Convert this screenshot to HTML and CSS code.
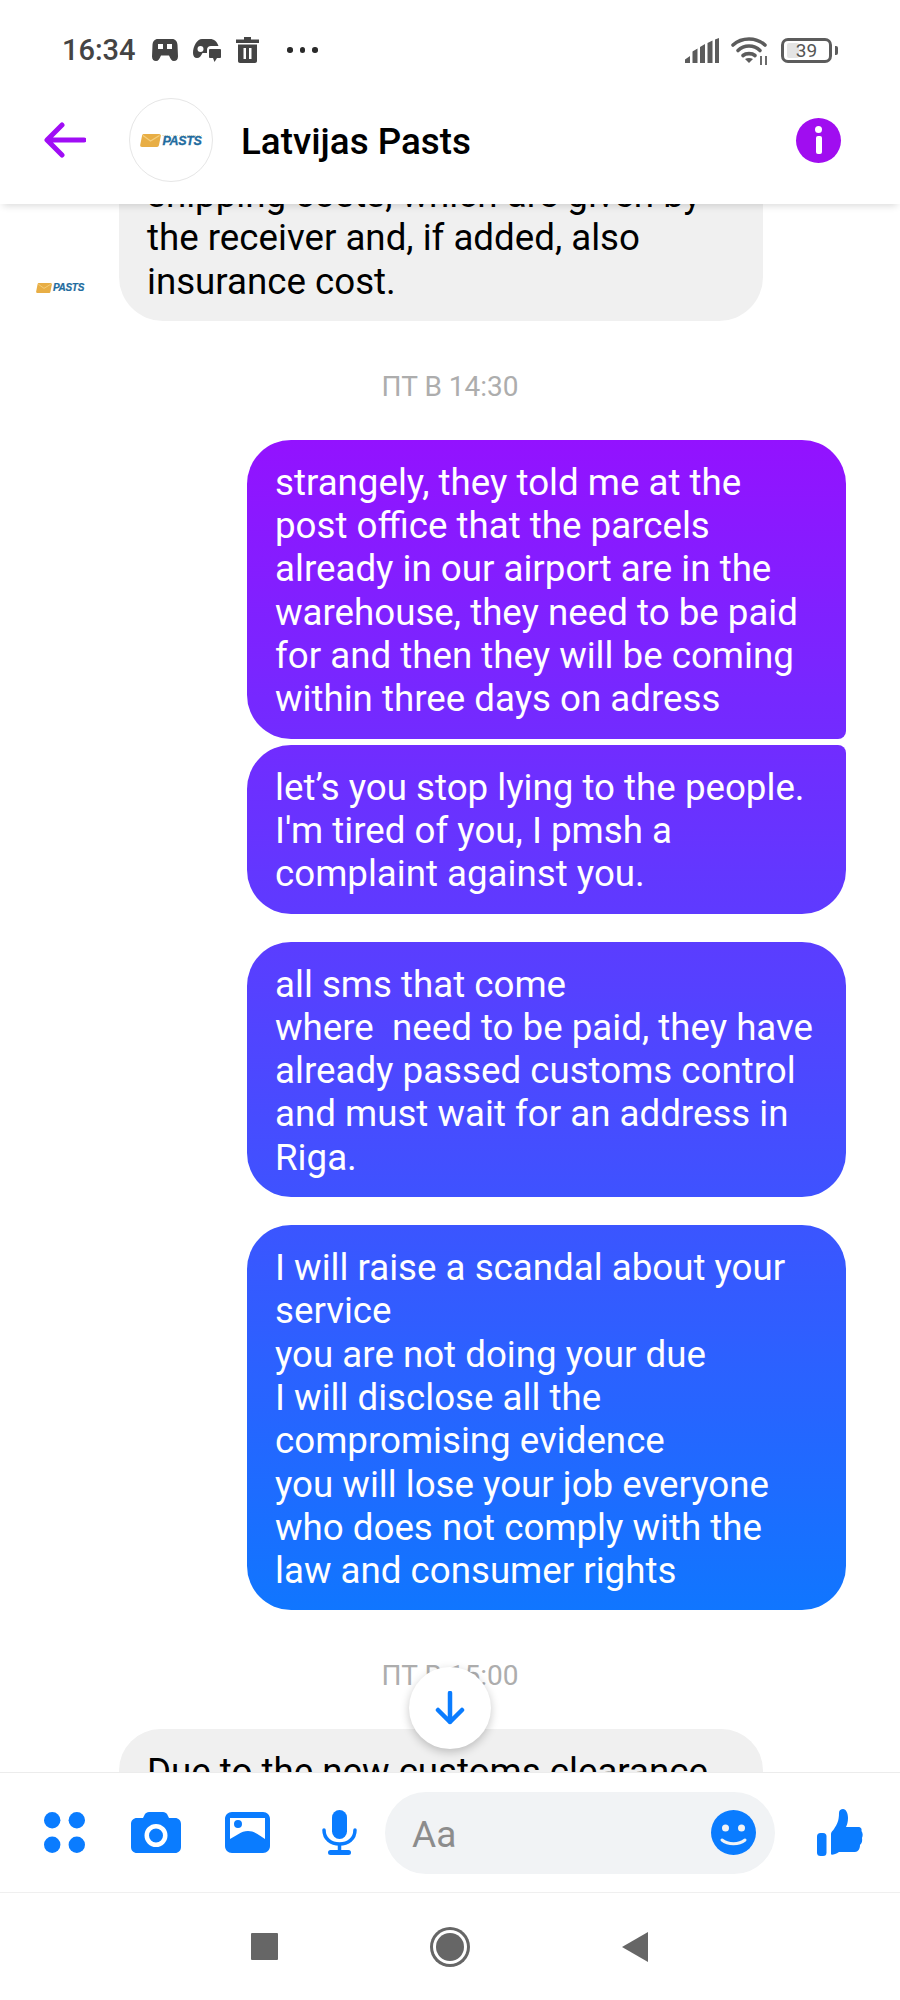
FILE: index.html
```html
<!DOCTYPE html>
<html lang="en">
<head>
<meta charset="utf-8">
<title>Latvijas Pasts</title>
<link rel="stylesheet" href="styles.css">
</head>
<body>
<div class="phone">
  <div class="status">
    <span class="clock">16:34</span>
    <svg class="st-game" viewBox="0 0 26 22"><path fill-rule="evenodd" d="M6 0H20C23.500 0 25.300 2.500 25.500 6L26 17.500C26 20.500 24.200 22 22 22C19.500 22 18.500 20 17 16.500H9C7.500 20 6.500 22 4 22C1.800 22 0 20.500 0 17.500L.5 6C.7 2.500 2.500 0 6 0ZM6 5V10H11V5ZM15 5V10H20V5Z"/></svg>
    <svg class="st-game2" viewBox="0 0 28 24"><path fill-rule="evenodd" d="M9 1H17C21 1 24 3.500 25.500 8H18C15.500 8 14 9.500 14 12V15H9.500C8 18 6.500 20 4 20C1.500 20 0 18 0 15C0 8.500 4 1 9 1ZM7.500 8A3 3 0 1 0 7.500 14 3 3 0 0 0 7.500 8Z"/><path d="M17 11H27C27.500 11 28 11.500 28 12V19C28 19.500 27.500 20 27 20H24L21.500 24L20 20H17C16.500 20 16 19.500 16 19V12C16 11.500 16.500 11 17 11Z"/></svg>
    <svg class="st-trash" viewBox="0 0 23 26"><path fill-rule="evenodd" d="M8 0H15V2.500H23V6H0V2.500H8ZM2 7.500H21V24C21 25.200 20.200 26 19 26H4C2.800 26 2 25.200 2 24ZM7.500 11V22H10V11ZM13 11V22H15.500V11Z"/></svg>
    <span class="st-dots"><i></i><i></i><i></i></span>
    <span class="st-right">
      <svg class="st-signal" viewBox="0 0 34 25"><path d="M0 25V21.500L5 18V25ZM7.500 25V13.500L12.500 10.500V25ZM15 25V9L20 6V25ZM22.500 25V5L27.500 2.500V25ZM30 25V1.500L34 0V25Z"/></svg>
      <svg class="st-wifi" viewBox="0 0 38 29"><g fill="none" stroke="#5c5c5c" stroke-width="3.600" stroke-linecap="round"><path d="M2 9C11 1 25 1 34 9"/><path d="M7 14.500C13 8.500 23 8.500 29 14.500"/><path d="M12 19.500C15 17 21 17 24 19.500"/></g><path d="M14 23L18 27L22 23C19.500 21.500 16.500 21.500 14 23Z"/><path d="M30 20V29M35 20V29" stroke="#5c5c5c" stroke-width="1.800"/></svg>
      <span class="battery"><span class="battery-fill"></span><span class="battery-num">39</span></span>
      <span class="battery-nub"></span>
    </span>
  </div>

  <header class="topbar">
    <svg class="back" viewBox="0 0 42 36"><path d="M40 18H4M18 3L3 18L18 33" fill="none" stroke="#a00df5" stroke-width="5" stroke-linecap="round" stroke-linejoin="round"/></svg>
    <div class="avatar">
      <span class="logo"><svg class="env" viewBox="0 0 21 13"><path d="M3.500 0H19C20.500 0 21 1 20.800 2L19 11C18.800 12.300 18 13 17 13H2C.7 13 0 12 .2 11L2 2C2.200 .7 2.800 0 3.500 0Z" fill="#e8ae45"/><path d="M3 1.500L10.500 7L19.500 1.500" fill="none" stroke="#f5cf7e" stroke-width="1.200"/></svg><span class="logo-word">PASTS</span></span>
    </div>
    <h1 class="title">Latvijas Pasts</h1>
    <span class="info"><span class="info-dot"></span><span class="info-bar"></span></span>
  </header>

  <main class="thread">
    <div class="in-row in-first">
      <div class="avatar-sm">
        <span class="logo"><svg class="env-sm" viewBox="0 0 21 13"><path d="M3.500 0H19C20.500 0 21 1 20.800 2L19 11C18.800 12.300 18 13 17 13H2C.7 13 0 12 .2 11L2 2C2.200 .7 2.800 0 3.500 0Z" fill="#e8ae45"/><path d="M3 1.500L10.500 7L19.500 1.500" fill="none" stroke="#f5cf7e" stroke-width="1.200"/></svg><span class="logo-word-sm">PASTS</span></span>
      </div>
      <div class="bubble-in">shipping costs, which are given by<br>the receiver and, if added, also<br>insurance cost.</div>
    </div>

    <div class="stamp stamp-one">ПТ В 14:30</div>

    <div class="bubble-out tail-bottom">strangely, they told me at the<br>post office that the parcels<br>already in our airport are in the<br>warehouse, they need to be paid<br>for and then they will be coming<br>within three days on adress</div>
    <div class="bubble-out tail-top close">let’s you stop lying to the people.<br>I'm tired of you, I pmsh a<br>complaint against you.</div>
    <div class="bubble-out">all sms that come<br>where &nbsp;need to be paid, they have<br>already passed customs control<br>and must wait for an address in<br>Riga.</div>
    <div class="bubble-out">I will raise a scandal about your<br>service<br>you are not doing your due<br>I will disclose all the<br>compromising evidence<br>you will lose your job everyone<br>who does not comply with the<br>law and consumer rights</div>

    <div class="stamp stamp-two">ПТ В 15:00</div>

    <div class="in-row">
      <div class="avatar-gap"></div>
      <div class="bubble-in">Due to the new customs clearance</div>
    </div>

    <button class="scroll-down" aria-label="Scroll down"><svg viewBox="0 0 30 34"><path d="M15 2V31M3 19L15 31L27 19" fill="none" stroke="#0a7cff" stroke-width="4.500" stroke-linecap="round" stroke-linejoin="round"/></svg></button>
  </main>

  <footer class="composer">
    <svg class="ic-dots" viewBox="0 0 41 41"><circle cx="8.200" cy="8.200" r="8.200"/><circle cx="32.800" cy="8.200" r="8.200"/><circle cx="8.200" cy="32.800" r="8.200"/><circle cx="32.800" cy="32.800" r="8.200"/></svg>
    <svg class="ic-cam" viewBox="0 0 50 41"><path fill-rule="evenodd" d="M18 0H32C34 0 35 1 36 2L38 6H44C47.500 6 50 8.500 50 12V35C50 38.500 47.500 41 44 41H6C2.500 41 0 38.500 0 35V12C0 8.500 2.500 6 6 6H12L14 2C15 1 16 0 18 0ZM25 12A11.500 11.500 0 1 0 25 35 11.500 11.500 0 0 0 25 12ZM25 16.500A7 7 0 1 1 25 30.500 7 7 0 0 1 25 16.500Z"/></svg>
    <svg class="ic-photo" viewBox="0 0 45 41"><path fill-rule="evenodd" d="M7 0H38C42 0 45 3 45 7V34C45 38 42 41 38 41H7C3 41 0 38 0 34V7C0 3 3 0 7 0ZM5 6V27C11 24 16 19 23 19C30 19 35 24 40 27V6ZM13 8A4 4 0 1 1 13 16 4 4 0 0 1 13 8Z"/></svg>
    <svg class="ic-mic" viewBox="0 0 35 45"><rect x="10" y="0" width="15" height="29" rx="7.500"/><path d="M2 20C2 29 9 34 17.500 34C26 34 33 29 33 20" fill="none" stroke="#0a7cff" stroke-width="3.500" stroke-linecap="round"/><path d="M17.500 34V41" stroke="#0a7cff" stroke-width="3.500"/><rect x="6" y="40" width="23" height="5" rx="2.500"/></svg>
    <div class="input">
      <span class="placeholder">Aa</span>
      <svg class="ic-smile" viewBox="0 0 45 45"><circle cx="22.500" cy="22.500" r="22.500"/><circle cx="14.500" cy="18" r="3.500" fill="#f1f3f5"/><circle cx="30.500" cy="18" r="3.500" fill="#f1f3f5"/><path d="M11 30C17 35 28 35 34 30" fill="none" stroke="#f1f3f5" stroke-width="3" stroke-linecap="round"/></svg>
    </div>
    <svg class="ic-like" viewBox="0 0 46 47"><rect x="0" y="24" width="9.500" height="23" rx="3.500"/><path d="M14 45V25C14 23 16 21.500 17 20C20 15.500 22 12 22 4C22 1 24 0 26 0C29 0 31 4 31 9C31 13 30 16 29 18H41C44 18 45 20 44.500 22C46 24 46 27 45 29C45.500 32 45 34 43 36C43 40 41 43 38 43H22C18 45.500 14 46.500 14 45Z"/></svg>
  </footer>

  <nav class="navbar">
    <span class="nav-square"></span>
    <span class="nav-circle"></span>
    <span class="nav-back"></span>
  </nav>
</div>
</body>
</html>
```
FILE: styles.css
```css
* { box-sizing: border-box; }
html, body { margin: 0; padding: 0; background: #fff; }
body { font-family: Roboto, "Liberation Sans", sans-serif; }
.phone { width: 900px; height: 2000px; display: flex; flex-direction: column; overflow: hidden; background: #fff; }

.status { height: 76px; padding: 24px 62px 0 62px; display: flex; align-items: center; color: #444; flex: none; }
.status svg { fill: #444; flex: none; display: block; }
.clock { font-size: 29px; font-weight: 500; color: #444; width: 73px; white-space: nowrap; }
.st-game { width: 26px; height: 22px; margin-left: 17px; }
.st-game2 { width: 28px; height: 24px; margin-left: 15px; }
.st-trash { width: 23px; height: 26px; margin-left: 15px; }
.st-dots { display: flex; gap: 7px; margin-left: 28px; }
.st-dots i { width: 5.500px; height: 5.500px; border-radius: 50%; background: #2a2a2a; display: block; }
.st-right { margin-left: auto; display: flex; align-items: center; }
.status .st-signal { width: 34px; height: 25px; fill: #5c5c5c; }
.status .st-wifi { width: 38px; height: 29px; margin-left: 12px; fill: #5c5c5c; }
.battery { width: 51px; height: 25px; margin-left: 12px; border: 3px solid #5c5c5c; border-radius: 7px; position: relative; display: flex; align-items: center; justify-content: center; }
.battery-fill { position: absolute; left: 3px; top: 2px; bottom: 2px; width: 12px; background: #e4e4e4; border-radius: 2px; }
.battery-num { position: relative; font-size: 19px; color: #555; line-height: 1; }
.battery-nub { width: 3.500px; height: 9px; margin-left: 2.500px; background: #5c5c5c; border-radius: 0 2px 2px 0; }

.topbar { height: 128px; flex: none; display: flex; align-items: center; padding: 0 59px 0 44px; background: #fff; position: relative; z-index: 2; box-shadow: 0 5px 7px -3px rgba(0,0,0,.14); }
.back { width: 42px; height: 36px; flex: none; }
.avatar { width: 84px; height: 84px; margin-left: 43px; border: 1px solid #e6e6e6; border-radius: 50%; display: flex; align-items: center; justify-content: center; flex: none; }
.logo { display: flex; align-items: center; gap: 1px; }
.env { width: 21px; height: 13px; display: block; }
.env-sm { width: 16px; height: 10px; display: block; }
.logo-word { font: italic 700 12.500px/9px "Liberation Sans", sans-serif; color: #226b9e; letter-spacing: -.3px; -webkit-text-stroke: .3px #226b9e; padding-top: 1px; border-top: 1px dotted #efe6c4; margin-top: 1px; }
.logo-word-sm { font: italic 700 10px/8px "Liberation Sans", sans-serif; color: #226b9e; letter-spacing: -.3px; -webkit-text-stroke: .2px #226b9e; }
.title { margin: 2px 0 0 28px; font-size: 36.800px; font-weight: 500; color: #000; white-space: nowrap; }
.info { margin-left: auto; width: 45px; height: 45px; border-radius: 50%; background: #a00df0; display: flex; flex-direction: column; align-items: center; justify-content: center; gap: 3px; flex: none; }
.info-dot { width: 7px; height: 7px; border-radius: 50%; background: #fff; }
.info-bar { width: 6px; height: 18px; border-radius: 2px; background: #fff; }

.thread { flex: 1; min-height: 0; overflow: hidden; position: relative; display: flex; flex-direction: column; font-size: 36.700px; line-height: 43.300px; }
.in-row { display: flex; align-items: flex-end; padding-left: 27px; flex: none; }
.in-first { margin-top: -52px; }
.avatar-sm { width: 66px; height: 66px; border-radius: 50%; display: flex; align-items: center; justify-content: center; flex: none; }
.avatar-gap { width: 66px; flex: none; }
.bubble-in { margin-left: 26px; width: 644px; padding: 21px 28px 18px; border-radius: 44px; background: #f0f0f0; color: #000; white-space: nowrap; flex: none; }

.stamp { flex: none; font-size: 28px; line-height: 30px; color: #adadad; text-align: center; }
.stamp-one { margin: 51px 0 38px; }
.stamp-two { margin: 51px 0 38px; }

.bubble-out { flex: none; margin: 28px 54px 0 247px; padding: 21px 28px 18px; border-radius: 44px; color: #fff; white-space: nowrap; background: linear-gradient(180deg, #9312ff 0, #9312ff 440px, #1076ff 1610px, #1076ff 100%) fixed; }
.stamp + .bubble-out { margin-top: 0; }
.bubble-out.close { margin-top: 6px; }
.tail-bottom { border-bottom-right-radius: 8px; }
.tail-top { border-top-right-radius: 8px; }

.scroll-down { position: absolute; left: 409px; top: 1463px; width: 82px; height: 82px; padding: 0; border: 0; border-radius: 50%; background: #fff; box-shadow: 0 3px 10px rgba(0,0,0,.22); display: flex; align-items: center; justify-content: center; }
.scroll-down svg { width: 30px; height: 34px; display: block; }

.composer { height: 121px; flex: none; display: flex; align-items: center; padding-left: 44px; background: #fff; border-top: 1px solid #ececec; border-bottom: 1px solid #efefef; position: relative; z-index: 2; }
.composer svg { fill: #0a7cff; flex: none; display: block; }
.ic-dots { width: 41px; height: 41px; }
.ic-cam { width: 50px; height: 41px; margin-left: 46px; }
.ic-photo { width: 45px; height: 41px; margin-left: 44px; }
.ic-mic { width: 35px; height: 45px; margin-left: 52px; }
.input { width: 390px; height: 82px; margin-left: 28px; border-radius: 41px; background: #f1f3f5; display: flex; align-items: center; justify-content: space-between; padding: 0 19px 0 27px; flex: none; }
.placeholder { font-size: 37px; color: #8c8c8c; padding-top: 3px; }
.ic-smile { width: 45px; height: 45px; }
.ic-like { width: 46px; height: 47px; margin-left: 42px; }

.navbar { height: 107px; flex: none; display: flex; align-items: center; justify-content: center; gap: 158px; padding-right: 2px; background: #fff; }
.nav-square { width: 27px; height: 27px; background: #666; border-radius: 1px; }
.nav-circle { width: 28px; height: 28px; border-radius: 50%; background: #666; box-shadow: 0 0 0 3px #fff, 0 0 0 6px #666; }
.nav-back { width: 0; height: 0; border-style: solid; border-width: 15px 26px 15px 0; border-color: transparent #666 transparent transparent; }
```
